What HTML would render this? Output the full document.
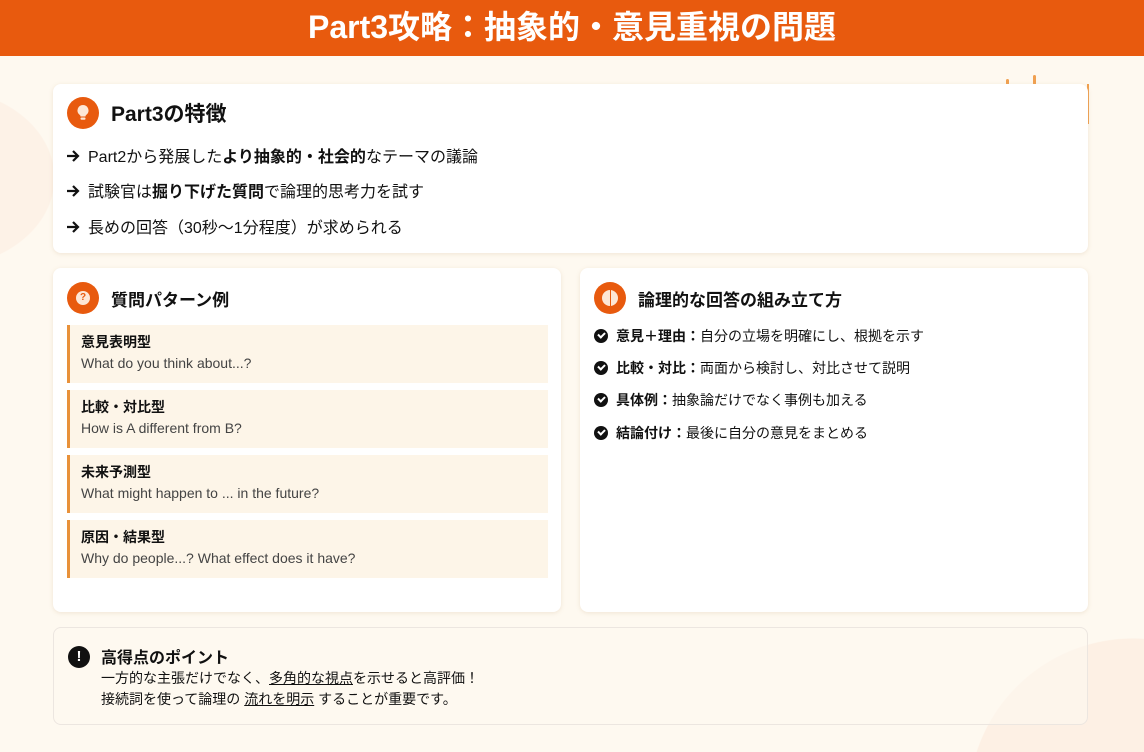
<!DOCTYPE html>
<html><head><meta charset="utf-8"><style>
*{margin:0;padding:0;box-sizing:border-box}
html,body{width:1144px;height:752px;overflow:hidden}
body{font-family:"Liberation Sans","Noto Sans CJK JP",sans-serif;color:#111}
#w{position:relative;width:1144px;height:752px;overflow:hidden;background:radial-gradient(circle at 1133px 803px,#fdf0e4 164px,transparent 165px),radial-gradient(ellipse 115px 90px at -60px 178px,#fdf2e7 99%,transparent 100%),#fef9f0}
.hdr{position:absolute;left:0;top:0;width:1144px;height:56px;background:#e85a0e;color:#fff;font-weight:bold;font-size:32px;text-align:center;line-height:54px}
.card{position:absolute;background:#fff;border-radius:8px;box-shadow:0 1px 4px rgba(200,170,130,.25)}
.ic{position:absolute;width:32px;height:32px;border-radius:50%;background:#e85a0e}
.t{position:absolute;font-weight:bold}
.ln{position:absolute;font-size:16px;white-space:nowrap;padding-left:22px}
.ln svg{position:absolute;left:0;top:6px}
.it{position:absolute;left:14px;width:481px;height:58px;background:#fdf5e8;border-left:3px solid #e8913a;padding:8px 0 0 11px}
.it b{display:block;font-size:14px;line-height:18px}
.it span{display:block;font-size:14px;color:#444;line-height:24px}
.ck{position:absolute;font-size:14px;white-space:nowrap;padding-left:22px}
.ck::before{content:"";position:absolute;left:0;top:3px;width:14px;height:14px;border-radius:50%;background:#111}
.ck::after{content:"";position:absolute;left:4px;top:6px;width:5px;height:3px;border-left:2px solid #fff;border-bottom:2px solid #fff;transform:rotate(-45deg)}
</style></head><body><div id="w">
<div class="hdr">Part3攻略：抽象的・意見重視の問題</div>
<div style="position:absolute;left:1006px;top:79px;width:3px;height:6px;background:#f0a050;border-radius:2px"></div>
<div style="position:absolute;left:1033px;top:75px;width:3px;height:10px;background:#f0a050;border-radius:2px"></div>
<div style="position:absolute;left:1087px;top:84px;width:2px;height:40px;background:#f0a050"></div>

<div class="card" style="left:53px;top:84px;width:1035px;height:169px">
 <div class="ic" style="left:14px;top:13px"><svg width="32" height="32" viewBox="0 0 32 32"><path d="M16 8a5.5 5.5 0 0 0-3.3 9.9c.6.5.8 1 .8 1.6h5c0-.6.2-1.1.8-1.6A5.5 5.5 0 0 0 16 8z" fill="#fde7d6"/><rect x="13.5" y="20.5" width="5" height="2.2" rx="1" fill="#fde7d6"/></svg></div>
 <div class="t" style="left:58px;top:14px;font-size:21px">Part3の特徴</div>
 <div class="ln" style="left:13px;top:59px"><svg width="14" height="14" viewBox="0 0 14 14"><path d="M1 7h11M7 2l5 5-5 5" fill="none" stroke="#111" stroke-width="2.2"/></svg>Part2から発展した<b>より抽象的・社会的</b>なテーマの議論</div>
 <div class="ln" style="left:13px;top:94px"><svg width="14" height="14" viewBox="0 0 14 14"><path d="M1 7h11M7 2l5 5-5 5" fill="none" stroke="#111" stroke-width="2.2"/></svg>試験官は<b>掘り下げた質問</b>で論理的思考力を試す</div>
 <div class="ln" style="left:13px;top:130px"><svg width="14" height="14" viewBox="0 0 14 14"><path d="M1 7h11M7 2l5 5-5 5" fill="none" stroke="#111" stroke-width="2.2"/></svg>長めの回答（30秒〜1分程度）が求められる</div>
</div>

<div class="card" style="left:53px;top:268px;width:508px;height:344px">
 <div class="ic" style="left:14px;top:14px"><div style="position:absolute;left:9px;top:9px;width:14px;height:14px;border-radius:50%;background:#fde7d6;color:#e85a0e;font-size:10px;font-weight:bold;text-align:center;line-height:14px">?</div></div>
 <div class="t" style="left:58px;top:18px;font-size:17px">質問パターン例</div>
 <div class="it" style="top:57px"><b>意見表明型</b><span>What do you think about...?</span></div>
 <div class="it" style="top:122px"><b>比較・対比型</b><span>How is A different from B?</span></div>
 <div class="it" style="top:187px"><b>未来予測型</b><span>What might happen to ... in the future?</span></div>
 <div class="it" style="top:252px"><b>原因・結果型</b><span>Why do people...? What effect does it have?</span></div>
</div>

<div class="card" style="left:580px;top:268px;width:508px;height:344px">
 <div class="ic" style="left:14px;top:14px"><div style="position:absolute;left:8px;top:8px;width:16px;height:16px;border-radius:50%;background:#fde7d6"></div><div style="position:absolute;left:15.5px;top:8px;width:1px;height:16px;background:#e85a0e"></div></div>
 <div class="t" style="left:58px;top:18px;font-size:17px">論理的な回答の組み立て方</div>
 <div class="ck" style="left:14px;top:58px"><b>意見＋理由：</b>自分の立場を明確にし、根拠を示す</div>
 <div class="ck" style="left:14px;top:90px"><b>比較・対比：</b>両面から検討し、対比させて説明</div>
 <div class="ck" style="left:14px;top:122px"><b>具体例：</b>抽象論だけでなく事例も加える</div>
 <div class="ck" style="left:14px;top:155px"><b>結論付け：</b>最後に自分の意見をまとめる</div>
</div>

<div style="position:absolute;left:53px;top:627px;width:1035px;height:98px;border:1px solid #ece6e0;border-radius:8px;background:rgba(254,249,240,.6)">
 <div style="position:absolute;left:14px;top:18px;width:22px;height:22px;border-radius:50%;background:#111;color:#fff;font-weight:bold;font-size:15px;text-align:center;line-height:22px">!</div>
 <div class="t" style="left:47px;top:16px;font-size:16px">高得点のポイント</div>
 <div style="position:absolute;left:47px;top:40px;font-size:14px;line-height:21px;white-space:nowrap">一方的な主張だけでなく、<u>多角的な視点</u>を示せると高評価！<br>接続詞を使って論理の <u>流れを明示</u> することが重要です。</div>
</div>
</div></body></html>
